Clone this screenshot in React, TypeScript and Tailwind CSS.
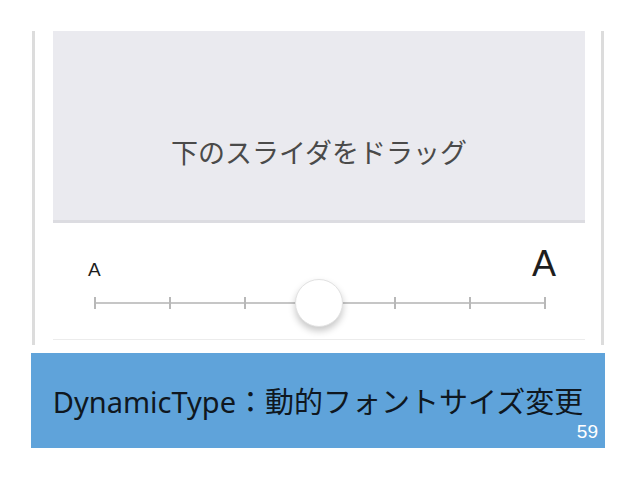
export default function App() {
  const ticks = [0, 1, 2, 3, 4, 5, 6];

  return (
    <div className="min-h-screen bg-white pt-[30px] font-['Noto_Sans','Noto_Sans_CJK_JP',sans-serif]">
      {/* phone screenshot frame */}
      <div className="ml-[32px] w-[572px] h-[314px] border-x-[3px] border-[#dcdcdc]">
        {/* sample text panel */}
        <div className="mt-[1px] ml-[18px] w-[532px] h-[192px] bg-[#eaeaef] border-b-[3px] border-[#dcdce1] pt-[107px] text-center">
          <p className="text-[27px] leading-[27px] text-[#4a4a4a] font-['Noto_Sans_CJK_JP',sans-serif]">
            下のスライダをドラッグ
          </p>
        </div>

        {/* font size slider */}
        <div className="ml-[18px] w-[532px] h-[117px] border-b border-[#ececec] font-['Liberation_Sans',Arial,sans-serif] text-[#1e1e1e]">
          <div className="flex items-baseline justify-between pl-[35px] pr-[29px] pt-[23px] h-[59px]">
            <span className="text-[19px] leading-none">A</span>
            <span className="text-[36px] leading-none">A</span>
          </div>
          <div className="relative ml-[41px] mt-[15px] w-[452px] h-[12px] flex items-center justify-between bg-[linear-gradient(#c6c6c6,#c6c6c6)] bg-no-repeat bg-center bg-[length:100%_2px]">
            {ticks.map((t) => (
              <span key={t} className="w-[2px] h-[12px] bg-[#b8b8b8]" />
            ))}
            <div className="absolute left-[201px] top-[-18px] w-[48px] h-[48px] rounded-full bg-white border border-[#e2e2e2] shadow-[0_4px_7px_rgba(0,0,0,0.22)]" />
          </div>
        </div>
      </div>

      {/* caption banner */}
      <div className="ml-[31px] mt-[8px] w-[574px] h-[95px] bg-[#5fa3da] pt-[34px] flex flex-col">
        <p className="text-center text-[29px] leading-[29px] text-[#0f1720]">
          DynamicType：動的フォントサイズ変更
        </p>
        <div className="mt-[6px] flex justify-end pr-[7px]">
          <span className="text-[19px] leading-none text-white font-['Liberation_Sans',Arial,sans-serif]">59</span>
        </div>
      </div>
    </div>
  );
}
